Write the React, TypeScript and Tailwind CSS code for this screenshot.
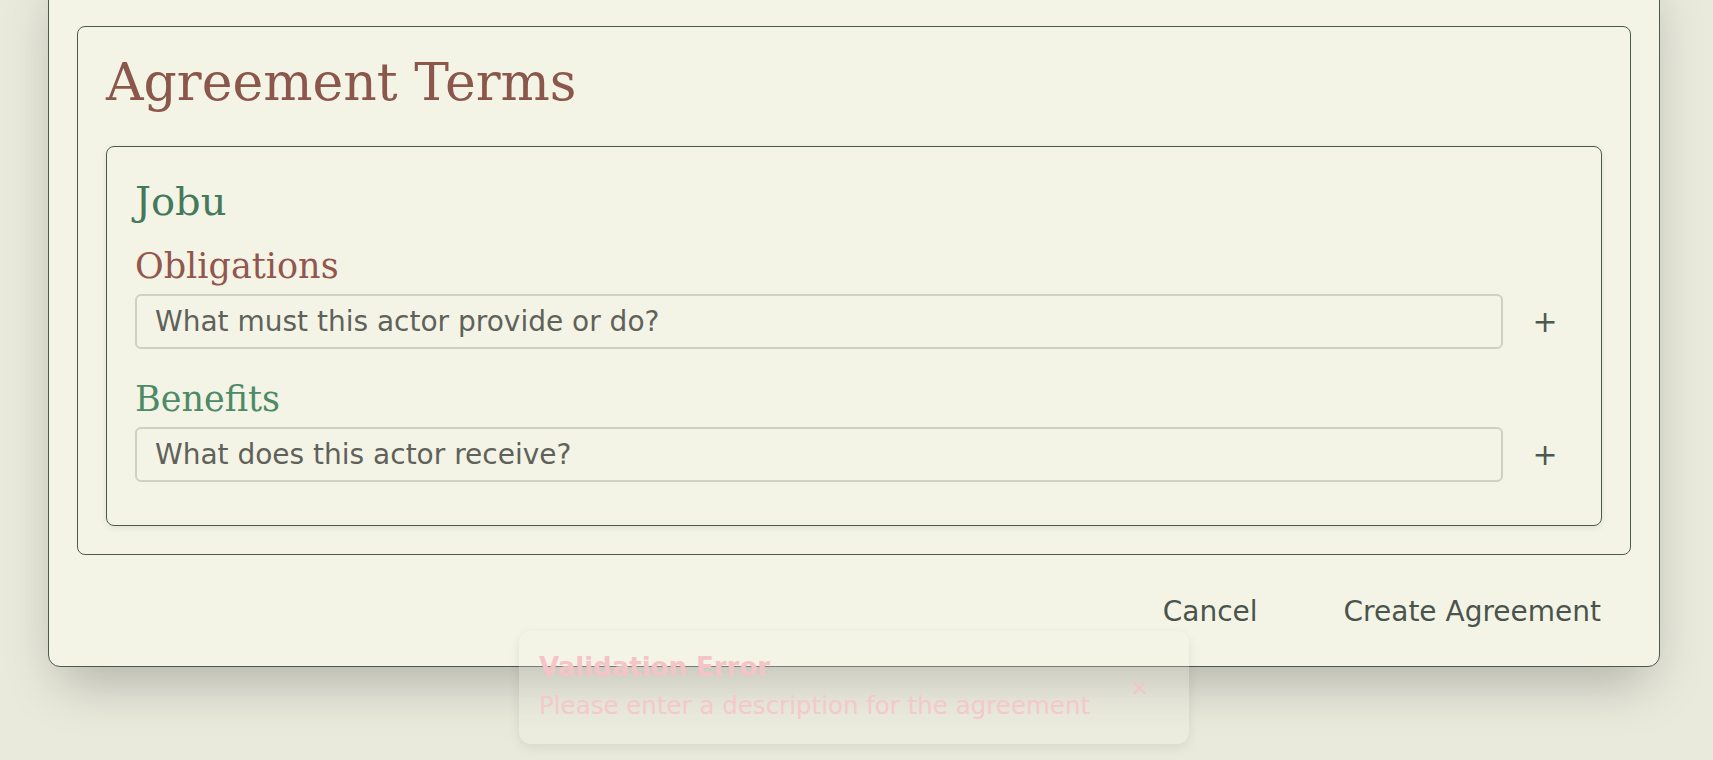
const TermField = ({
  label,
  labelColor,
  placeholder,
  className,
}: {
  label: string;
  labelColor: string;
  placeholder: string;
  className: string;
}) => {
  return (
    <div className={className}>
      <h4 className={`font-['DejaVu_Serif',serif] text-[35px] leading-[40px] mb-2 ${labelColor}`}>{label}</h4>
      <div className="flex items-center gap-[14px]">
        <input
          type="text"
          placeholder={placeholder}
          className="h-[55px] flex-1 rounded-md border-2 border-[#d0d0c2] bg-transparent px-[18px] text-[28px] text-[#3f463f] outline-none placeholder:text-[#5f625a]"
        />
        <button className="flex h-[55px] w-14 items-center justify-center text-[30px] leading-none text-[#4a5a4e]">
          +
        </button>
      </div>
    </div>
  );
};

const App = () => {
  return (
    <div className="relative h-screen w-full overflow-hidden bg-[#e9e9dc] font-['DejaVu_Sans',sans-serif]">
      <div className="-mt-10 ml-[48px] w-[1612px] rounded-xl border border-[#4b5a4f] bg-[#f4f4e6] px-7 pt-[65px] pb-[25px] shadow-2xl">
        <section className="rounded-lg border border-[#4b5a4f] p-7">
          <h2 className="mb-[37px] font-['DejaVu_Serif',serif] text-[52px] leading-[54px] text-[#8b574a]">
            Agreement Terms
          </h2>

          <div className="rounded-lg border border-[#4b5a4f] px-7 pt-7 pb-[43px] shadow-[0_2px_6px_rgba(0,0,0,0.08)]">
            <h3 className="font-['DejaVu_Serif',serif] text-[40px] leading-[52px] text-[#437a5b]">Jobu</h3>
            <TermField
              className="mt-[19px]"
              label="Obligations"
              labelColor="text-[#93564d]"
              placeholder="What must this actor provide or do?"
            />
            <TermField
              className="mt-[30px]"
              label="Benefits"
              labelColor="text-[#4d8a66]"
              placeholder="What does this actor receive?"
            />
          </div>
        </section>

        <div className="mt-7 flex justify-end gap-[30px] pr-[2px]">
          <button className="h-[58px] px-7 text-[28px] text-[#4a544c]">Cancel</button>
          <button className="h-[58px] px-7 text-[28px] text-[#4a544c]">Create Agreement</button>
        </div>
      </div>

      {/* toast fading out */}
      <div className="absolute bottom-4 left-[519px] flex h-[113px] w-[670px] items-center justify-between rounded-xl bg-[#f4f4e6]/25 pl-5 pr-[40px] shadow-[0_4px_12px_rgba(0,0,0,0.08)]">
        <div className="pb-1">
          <p className="text-[26px] font-bold leading-[34px] text-[#f5c4c8]">Validation Error</p>
          <p className="mt-[6px] text-[24.5px] leading-[32px] text-[#f5c8cb]">
            Please enter a description for the agreement
          </p>
        </div>
        <span className="text-[22px] leading-none text-[#f5c4c8]">×</span>
      </div>
    </div>
  );
};

export default App;
